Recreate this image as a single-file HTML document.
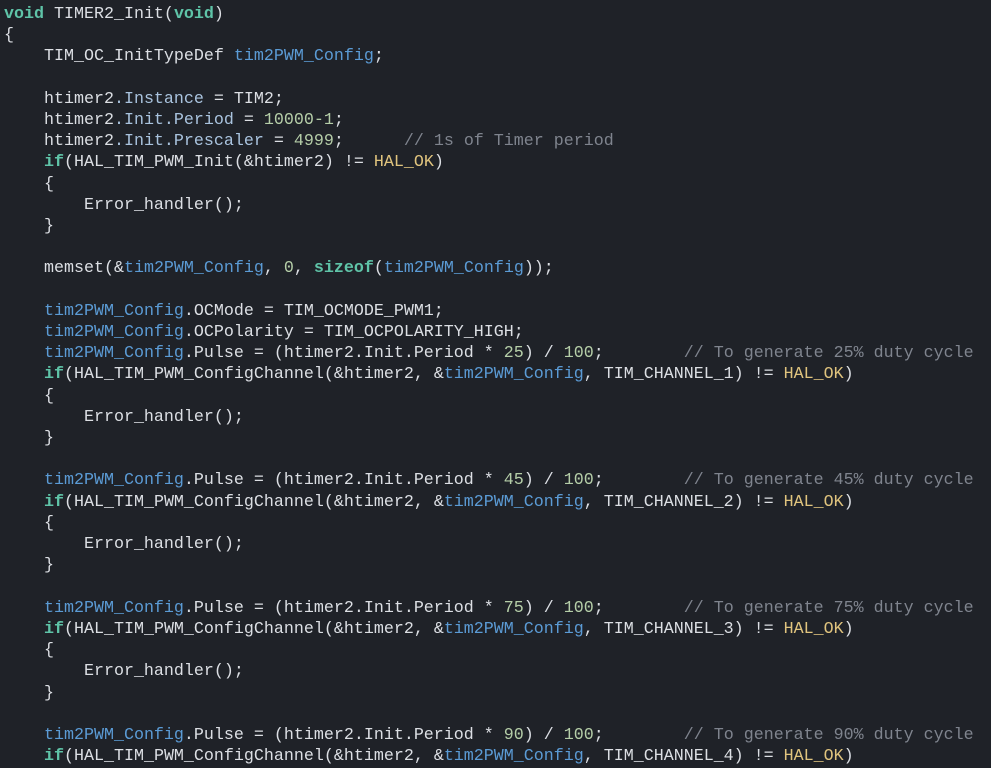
<!DOCTYPE html>
<html><head><meta charset="utf-8"><style>
html,body{margin:0;padding:0;background:#1f2228;width:991px;height:768px;overflow:hidden}
pre{margin:0;position:absolute;left:4px;top:4px;font-family:"Liberation Mono",monospace;font-size:16.67px;line-height:21.2px;color:#dcdfe4}
.k{color:#5fc4a8;font-weight:bold}
.n{color:#b5cea8}
.c{color:#7f848e}
.v{color:#5b9bd5}
.m{color:#a9c3de}
.h{color:#e0c47e}
</style></head><body><pre><span class="k">void</span> TIMER2_Init(<span class="k">void</span>)
{
    TIM_OC_InitTypeDef <span class="v">tim2PWM_Config</span>;

    htimer2<span class="m">.Instance</span> = TIM2;
    htimer2<span class="m">.Init.Period</span> = <span class="n">10000-1</span>;
    htimer2<span class="m">.Init.Prescaler</span> = <span class="n">4999</span>;      <span class="c">// 1s of Timer period</span>
    <span class="k">if</span>(HAL_TIM_PWM_Init(&amp;htimer2) != <span class="h">HAL_OK</span>)
    {
        Error_handler();
    }

    memset(&amp;<span class="v">tim2PWM_Config</span>, <span class="n">0</span>, <span class="k">sizeof</span>(<span class="v">tim2PWM_Config</span>));

    <span class="v">tim2PWM_Config</span>.OCMode = TIM_OCMODE_PWM1;
    <span class="v">tim2PWM_Config</span>.OCPolarity = TIM_OCPOLARITY_HIGH;
    <span class="v">tim2PWM_Config</span>.Pulse = (htimer2.Init.Period * <span class="n">25</span>) / <span class="n">100</span>;        <span class="c">// To generate 25% duty cycle</span>
    <span class="k">if</span>(HAL_TIM_PWM_ConfigChannel(&amp;htimer2, &amp;<span class="v">tim2PWM_Config</span>, TIM_CHANNEL_1) != <span class="h">HAL_OK</span>)
    {
        Error_handler();
    }

    <span class="v">tim2PWM_Config</span>.Pulse = (htimer2.Init.Period * <span class="n">45</span>) / <span class="n">100</span>;        <span class="c">// To generate 45% duty cycle</span>
    <span class="k">if</span>(HAL_TIM_PWM_ConfigChannel(&amp;htimer2, &amp;<span class="v">tim2PWM_Config</span>, TIM_CHANNEL_2) != <span class="h">HAL_OK</span>)
    {
        Error_handler();
    }

    <span class="v">tim2PWM_Config</span>.Pulse = (htimer2.Init.Period * <span class="n">75</span>) / <span class="n">100</span>;        <span class="c">// To generate 75% duty cycle</span>
    <span class="k">if</span>(HAL_TIM_PWM_ConfigChannel(&amp;htimer2, &amp;<span class="v">tim2PWM_Config</span>, TIM_CHANNEL_3) != <span class="h">HAL_OK</span>)
    {
        Error_handler();
    }

    <span class="v">tim2PWM_Config</span>.Pulse = (htimer2.Init.Period * <span class="n">90</span>) / <span class="n">100</span>;        <span class="c">// To generate 90% duty cycle</span>
    <span class="k">if</span>(HAL_TIM_PWM_ConfigChannel(&amp;htimer2, &amp;<span class="v">tim2PWM_Config</span>, TIM_CHANNEL_4) != <span class="h">HAL_OK</span>)
</pre></body></html>
